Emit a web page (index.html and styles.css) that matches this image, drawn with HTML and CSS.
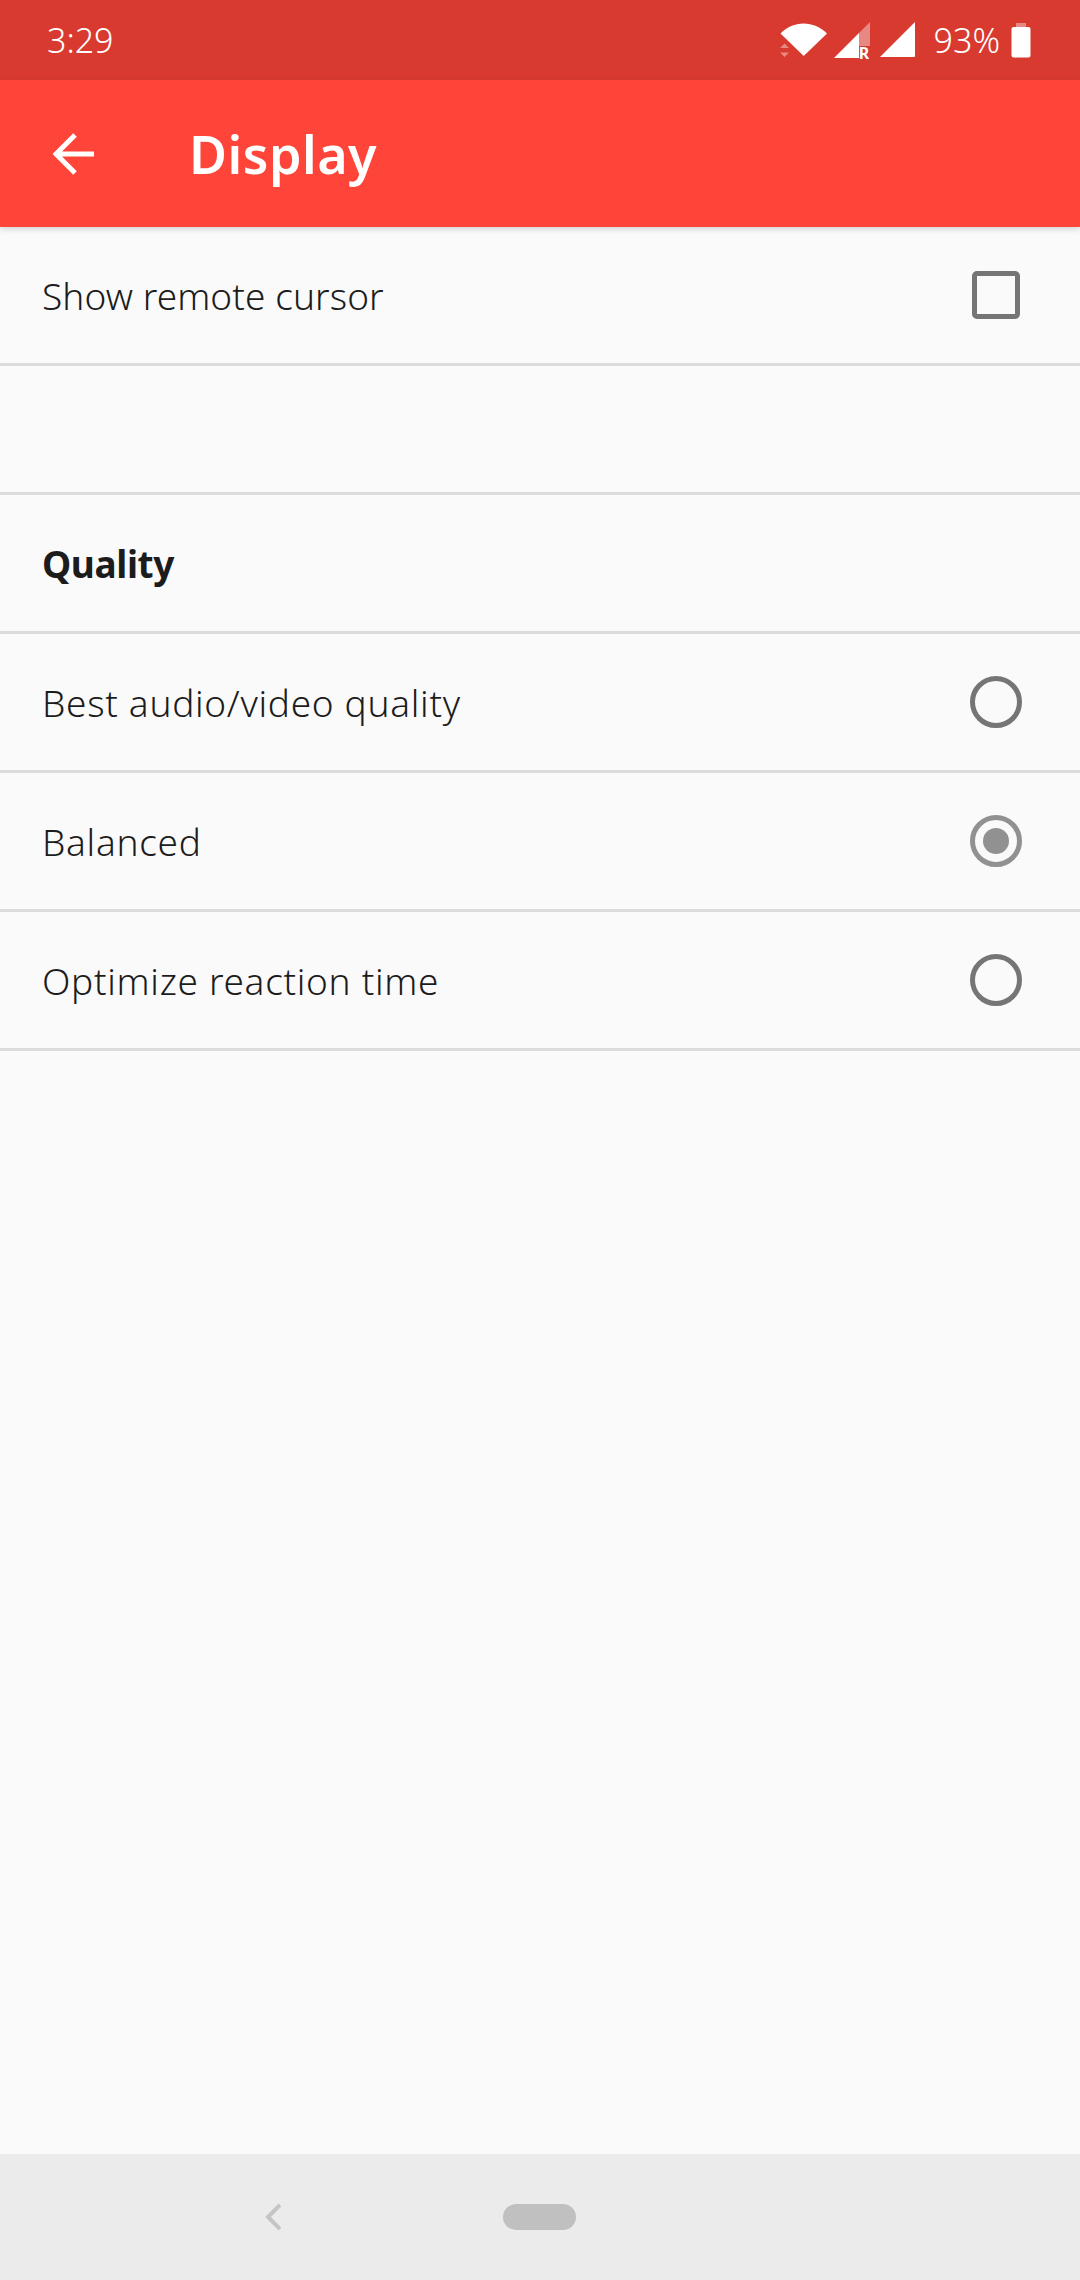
FILE: index.html
```html
<!DOCTYPE html>
<html lang="en">
<head>
<meta charset="utf-8">
<title>Display</title>
<link rel="stylesheet" href="styles.css">
</head>
<body>
<div class="screen">
  <header class="status-bar">
    <span class="clock">3:29</span>
    <div class="status-icons">
      <svg class="icon-wifi" width="48" height="36" viewBox="0 0 48 36">
        <path class="solid" d="M0.500 11.500 C13 -2 34 -2 47 11.500 L23.700 34 Z"/>
        <path class="faint" d="M4.500 22.500 L0 27 H9 Z M4.500 36 L0 31.500 H9 Z" transform="translate(0 -1)"/>
      </svg>
      <div class="signal">
        <svg width="36" height="37" viewBox="0 0 36 37">
          <path class="faint" d="M36 0 V24 H25 V11 Z"/>
          <path class="solid" d="M0 36 L25 11 V36 Z"/>
        </svg>
        <span class="roaming">R</span>
      </div>
      <svg class="icon-signal-full" width="36" height="36" viewBox="0 0 36 36">
        <path class="solid" d="M35 0 V34 Q35 35 34 35 H0 Z"/>
      </svg>
      <span class="battery-level">93%</span>
      <svg class="icon-battery" width="20" height="35" viewBox="0 0 20 35">
        <path class="faint" d="M5 0 H15 V4 H5 Z"/>
        <rect class="solid" x="0.500" y="4" width="19" height="30.500" rx="2"/>
      </svg>
    </div>
  </header>

  <div class="toolbar">
    <svg class="icon-back" width="42" height="42" viewBox="0 0 42 42">
      <path d="M41 21 H3 M22 2 L3 21 L22 40"/>
    </svg>
    <h1 class="toolbar-title">Display</h1>
  </div>

  <main class="settings">
    <div class="row">
      <span class="row-label row-label-tight">Show remote cursor</span>
      <span class="checkbox"></span>
    </div>
    <div class="row row-spacer"></div>
    <div class="row">
      <span class="row-label row-heading">Quality</span>
    </div>
    <div class="row">
      <span class="row-label">Best audio/video quality</span>
      <span class="radio"></span>
    </div>
    <div class="row">
      <span class="row-label">Balanced</span>
      <span class="radio radio-selected"><span class="radio-dot"></span></span>
    </div>
    <div class="row">
      <span class="row-label">Optimize reaction time</span>
      <span class="radio"></span>
    </div>
  </main>

  <nav class="nav-bar">
    <svg class="nav-back" width="16" height="28" viewBox="0 0 16 28">
      <path d="M15 2 L3 14 L15 26"/>
    </svg>
    <span class="nav-home"></span>
  </nav>
</div>
</body>
</html>
```

FILE: styles.css
```css
* {
  box-sizing: border-box;
}

html,
body {
  margin: 0;
  padding: 0;
}

body {
  font-family: "Noto Sans", "Open Sans", sans-serif;
  color: #212121;
  background: #fafafa;
}

.screen {
  display: flex;
  flex-direction: column;
  width: 1080px;
  height: 2280px;
  overflow: hidden;
}

/* Status bar */
.status-bar {
  display: flex;
  align-items: center;
  justify-content: space-between;
  flex: none;
  height: 80px;
  padding: 0 49px 0 47px;
  background: #d93a30;
  color: #fff;
}

.clock,
.battery-level {
  font-size: 34px;
  font-weight: 300;
  line-height: 80px;
}

.status-icons {
  display: flex;
  align-items: center;
}

.status-icons .solid {
  fill: #fff;
}

.status-icons .faint {
  fill: #fff;
  opacity: 0.4;
}

.icon-wifi {
  margin-top: -1px;
}

.signal {
  position: relative;
  display: flex;
  width: 36px;
  height: 37px;
  margin-left: 6px;
}

.roaming {
  position: absolute;
  right: 0;
  bottom: 0;
  width: 11px;
  font-size: 16px;
  font-weight: 700;
  line-height: 12px;
  text-align: center;
  color: #fff;
}

.icon-signal-full {
  margin-left: 10px;
}

.battery-level {
  margin-left: 18px;
}

.icon-battery {
  margin-left: 11px;
}

/* Toolbar */
.toolbar {
  position: relative;
  z-index: 1;
  display: flex;
  align-items: center;
  flex: none;
  height: 147px;
  padding-left: 53px;
  background: #ff4539;
  box-shadow: 0 2px 6px rgba(0, 0, 0, 0.16);
}

.icon-back {
  flex: none;
}

.icon-back path {
  fill: none;
  stroke: #fff;
  stroke-width: 5;
}

.toolbar-title {
  margin: 0 0 0 94px;
  font-size: 52px;
  font-weight: 600;
  letter-spacing: 0.5px;
  color: #fff;
}

/* Settings list */
.settings {
  flex: 1;
}

.row {
  display: flex;
  align-items: center;
  justify-content: space-between;
  height: 139px;
  padding: 0 58px 0 42px;
  border-bottom: 3px solid #dcdcdc;
}

.row-spacer {
  height: 129px;
}

.row-label {
  font-size: 37px;
  font-weight: 300;
  letter-spacing: 0.7px;
  color: #1c1c1c;
}

.row-label-tight {
  letter-spacing: 0.1px;
}

.row-heading {
  font-weight: 700;
  letter-spacing: -0.4px;
}

.checkbox {
  width: 48px;
  height: 48px;
  margin-right: 2px;
  border: 5px solid #757575;
  border-radius: 5px;
}

.radio {
  display: flex;
  align-items: center;
  justify-content: center;
  width: 52px;
  height: 52px;
  border: 5px solid #757575;
  border-radius: 50%;
}

.radio-selected {
  border-color: #919191;
}

.radio-dot {
  width: 26px;
  height: 26px;
  border-radius: 50%;
  background: #919191;
}

/* Navigation bar */
.nav-bar {
  display: flex;
  align-items: center;
  flex: none;
  height: 126px;
  padding-left: 265px;
  background: #ebebeb;
}

.nav-back path {
  fill: none;
  stroke: #c4c4c4;
  stroke-width: 4;
}

.nav-home {
  width: 73px;
  height: 26px;
  margin-left: 222px;
  border-radius: 13px;
  background: #c0c0c0;
}
```
